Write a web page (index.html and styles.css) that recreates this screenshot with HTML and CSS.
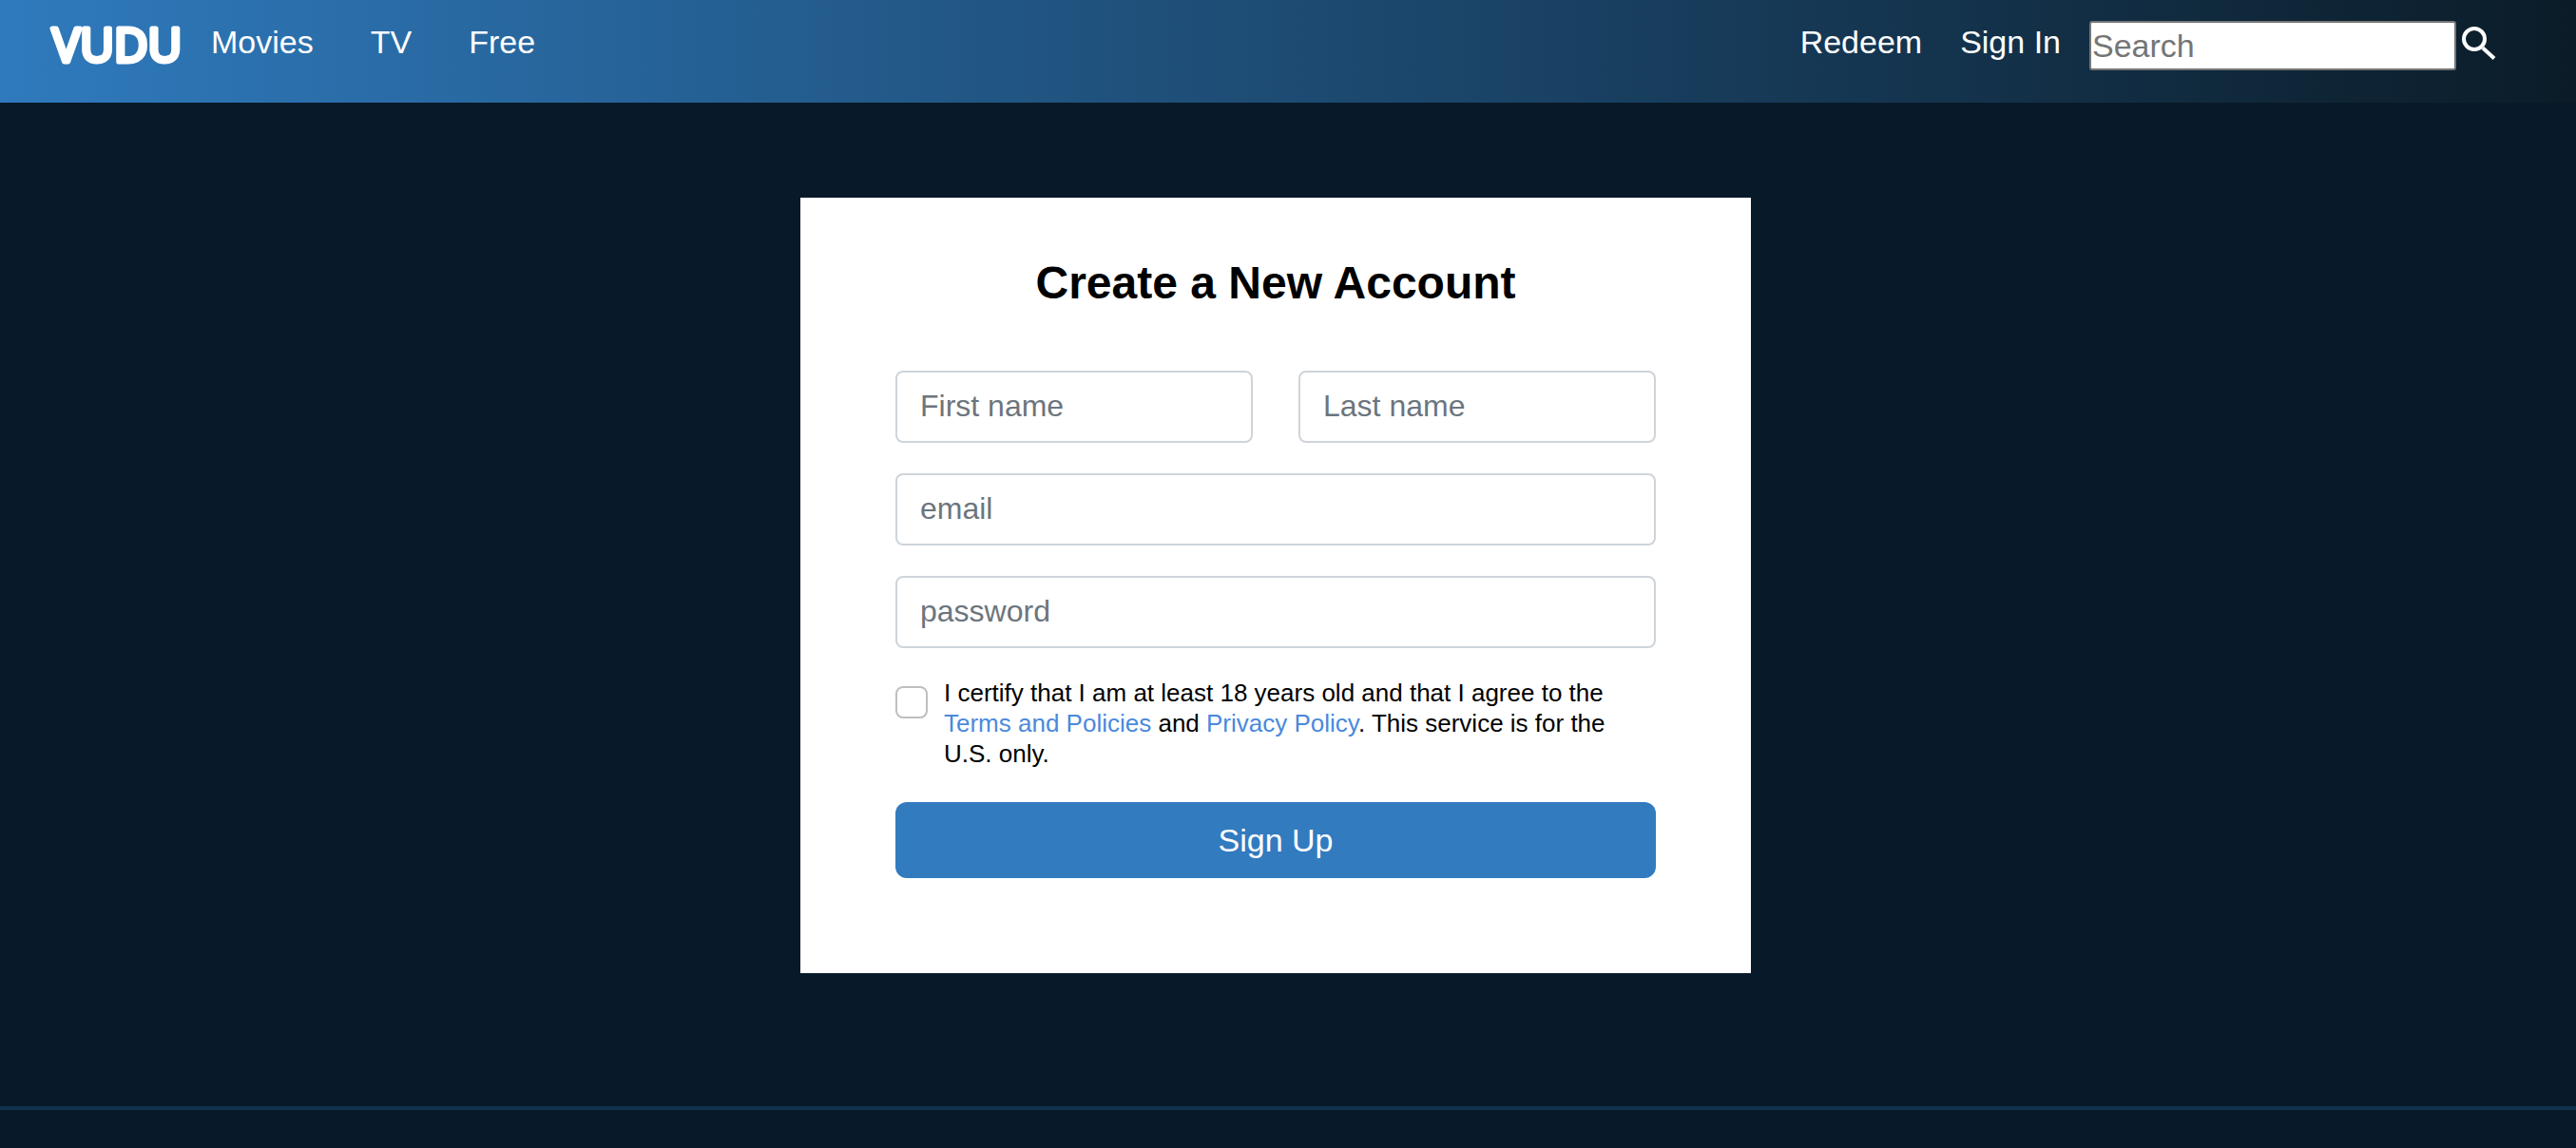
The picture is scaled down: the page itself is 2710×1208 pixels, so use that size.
FILE: index.html
```
<!DOCTYPE html>
<html lang="en">
<head>
<meta charset="utf-8">
<meta name="viewport" content="width=device-width, initial-scale=1">
<title>Vudu - Create a New Account</title>
<link rel="stylesheet" href="styles.css">
</head>
<body>
<header class="header">
  <a class="logo" href="#" aria-label="Vudu home">
    <svg class="logo-mark" viewBox="0 0 140 84" aria-hidden="true">
      <text class="logo-text" x="3" y="57">VUDU</text>
    </svg>
  </a>
  <nav class="nav nav-main">
    <a href="#">Movies</a>
    <a href="#">TV</a>
    <a href="#">Free</a>
  </nav>
  <nav class="nav nav-user">
    <a href="#">Redeem</a>
    <a href="#">Sign In</a>
  </nav>
  <form class="search" role="search">
    <input class="search-input" type="search" placeholder="Search" aria-label="Search">
    <button class="search-button" type="submit" aria-label="Search">
      <svg class="search-icon" viewBox="0 0 36 36" aria-hidden="true">
        <circle cx="13" cy="14" r="11"/>
        <path d="M22 23.500L34 34.500"/>
      </svg>
    </button>
  </form>
</header>
<main class="main">
  <form class="card">
    <h1 class="title">Create a New Account</h1>
    <div class="fields">
      <div class="names">
        <input class="field" type="text" placeholder="First name" aria-label="First name">
        <input class="field" type="text" placeholder="Last name" aria-label="Last name">
      </div>
      <input class="field" type="email" placeholder="email" aria-label="email">
      <input class="field" type="password" placeholder="password" aria-label="password">
    </div>
    <div class="consent">
      <input class="checkbox" id="certify" type="checkbox">
      <label class="consent-text" for="certify">I certify that I am at least 18 years old and that I agree to the <a href="#">Terms and Policies</a> and <a href="#">Privacy Policy</a>. This service is for the U.S. only.</label>
    </div>
    <button class="submit" type="submit">Sign Up</button>
  </form>
</main>
<footer class="footer"></footer>
</body>
</html>
```

FILE: styles.css
```
*,
*::before,
*::after {
  box-sizing: border-box;
}

body {
  display: flex;
  flex-direction: column;
  min-height: 100vh;
  margin: 0;
  background: #081a29;
  color: #000;
  font-family: "Liberation Sans", Arial, Helvetica, sans-serif;
}

input,
button {
  margin: 0;
  font-family: inherit;
}

a {
  text-decoration: none;
}

.header {
  display: flex;
  align-items: flex-start;
  min-height: 108px;
  padding: 8px 84px 0 52px;
  background: linear-gradient(to right, #2f7abd, #0b1c28);
}

.logo {
  display: flex;
  margin-right: 30px;
}

.logo-mark {
  width: 140px;
  height: 84px;
}

.logo-text {
  fill: #fff;
  stroke: #fff;
  stroke-width: 5px;
  stroke-linejoin: round;
  font-family: "Open Sans", sans-serif;
  font-size: 49px;
  font-weight: 400;
}

.nav {
  display: flex;
  margin-top: 14px;
  font-size: 34px;
  line-height: 44px;
}

.nav a {
  color: #fff;
}

.nav-main {
  gap: 60px;
}

.nav-user {
  gap: 40px;
  margin-left: auto;
  margin-right: 30px;
}

.search {
  display: flex;
  gap: 6px;
  margin-top: 14px;
}

.search-input {
  width: 386px;
  height: 52px;
  padding: 0 1px;
  border: 2px solid #767676;
  border-radius: 3px;
  background: #fff;
  font-size: 34px;
  appearance: none;
}

.search-input::placeholder {
  color: #757575;
}

.search-button {
  display: flex;
  width: 36px;
  height: 46px;
  padding: 5px 0;
  border: 0;
  background: none;
}

.search-icon {
  width: 36px;
  height: 36px;
  fill: none;
  stroke: #fff;
  stroke-width: 4;
}

.main {
  flex: 1;
  padding: 100px 26px 140px 0;
}

.card {
  width: 100%;
  max-width: 1000px;
  margin: 0 auto;
  padding: 60px 100px 100px;
  background: #fff;
}

.title {
  margin: 0 0 62px;
  font-size: 48px;
  line-height: 60px;
  text-align: center;
}

.fields {
  display: flex;
  flex-direction: column;
  gap: 32px;
}

.names {
  display: grid;
  grid-template-columns: 1fr 1fr;
  gap: 48px;
}

.field {
  width: 100%;
  height: 76px;
  padding: 10px 24px 12px;
  border: 2px solid #ced4da;
  border-radius: 8px;
  background: #fff;
  font-size: 32px;
}

.field::placeholder {
  color: #6c757d;
}

.consent {
  display: flex;
  gap: 17px;
  margin: 31px 0 35px;
}

.checkbox {
  flex: none;
  width: 34px;
  height: 34px;
  margin-top: 9px;
  border: 2px solid #bfbfbf;
  border-radius: 8px;
  background: #fff;
  appearance: none;
}

.checkbox:checked {
  background: #327bbf;
}

.consent-text {
  font-size: 26px;
  line-height: 32px;
}

.consent-text a {
  color: #4a89dc;
}

.submit {
  display: block;
  width: 100%;
  height: 80px;
  border: 0;
  border-radius: 12px;
  background: #327bbf;
  color: #fff;
  font-size: 34px;
}

.footer {
  min-height: 44px;
  border-top: 4px solid #12334f;
}
```
